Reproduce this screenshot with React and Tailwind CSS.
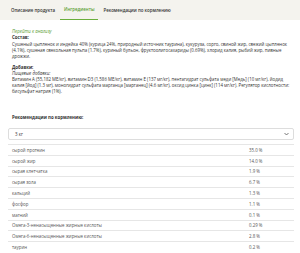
import React from 'react';

const rows = [
  ['сырой протеин', '35.0 %'],
  ['сырой жир', '14.0 %'],
  ['сырая клетчатка', '1.9 %'],
  ['сырая зола', '6.7 %'],
  ['кальций', '1.3 %'],
  ['фосфор', '1.1 %'],
  ['магний', '0.1 %'],
  ['Омега-3-ненасыщенные жирные кислоты', '0.29 %'],
  ['Омега-6-ненасыщенные жирные кислоты', '2.8 %'],
  ['таурин', '0.2 %'],
];

export default function App() {
  return (
    <div className="w-[300px] h-[253px] bg-white overflow-hidden font-['Open_Sans',sans-serif] text-[#333]">
      {/* Tabs */}
      <div className="h-[20px] bg-[#f4f3ee] flex pl-[7px] gap-[1px] text-[4.4px] font-semibold">
        <div className="flex items-center px-[4px]">Описание продукта</div>
        <div className="flex items-center px-[4px] text-[#5a9e34] border-b-[1.5px] border-[#6aae3c]">Ингредиенты</div>
        <div className="flex items-center px-[4px]">Рекомендации по кормлению</div>
      </div>

      <div className="pl-[8px] pr-[6px] pt-[8px] text-[4.4px] leading-[6px]">
        <div className="pl-[4px]">
          <div className="text-[#5a9e34] italic">Перейти к анализу</div>
          <div className="font-bold mb-[1px]">Состав:</div>
          <p>
            Сушеный цыпленок и индейка 40% (курица 24%, природный источник таурина), кукуруза, сорго, свиной жир, свежий цыпленок
            (4.1%), сушеная свекольная пульпа (1.7%), куриный бульон, фруктоолигосахариды (0.69%), хлорид калия, рыбий жир, пивные
            дрожжи.
          </p>

          <div className="font-bold mt-[5px]">Добавки:</div>
          <div className="italic">Пищевые добавки:</div>
          <p>
            Витамин A (55,182 МЕ/кг), витамин D3 (1,586 МЕ/кг), витамин E (137 мг/кг), пентагидрат сульфата меди [Медь] (10 мг/кг), йодид
            калия [йод] (1.3 мг), моногидрат сульфата марганца [марганец] (4.6 мг/кг), оксид цинка [цинк] (114 мг/кг). Регулятор кислотности:
            бисульфат натрия (1%).
          </p>

          <div className="font-bold mt-[20px]">Рекомендации по кормлению:</div>
        </div>

        <div className="mt-[8px] h-[12px] border border-[#ddd] rounded-[2px] flex items-center justify-between pl-[6px] pr-[4px]">
          <span>3 кг</span>
          <svg width="5" height="4" viewBox="0 0 10 6" fill="none" stroke="#555" strokeWidth="1.6">
            <path d="M1 1l4 4 4-4" />
          </svg>
        </div>

        <div className="mt-[4px] text-[#555]">
          {rows.map(([name, value], i) => (
            <div key={i} className="h-[10.8px] flex items-center border-t border-[#e6e6e6]">
              <span className="pl-[4px] flex-1">{name}</span>
              <span className="w-[45px]">{value}</span>
            </div>
          ))}
        </div>
      </div>
    </div>
  );
}
